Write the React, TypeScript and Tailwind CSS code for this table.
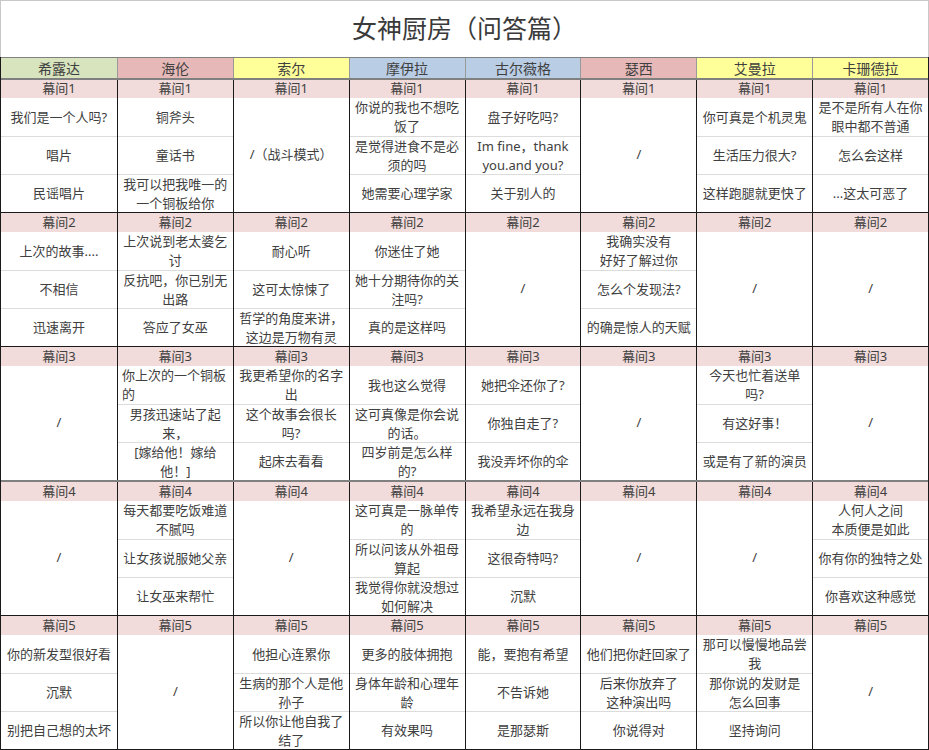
type Block = string | [string, string, string];

type Column = { name: string; color: string; blocks: Block[] };

const columns: Column[] = [
  {
    name: "希露达",
    color: "bg-[#d7e4bd]",
    blocks: [
      ["我们是一个人吗?", "唱片", "民谣唱片"],
      ["上次的故事....", "不相信", "迅速离开"],
      "/",
      "/",
      ["你的新发型很好看", "沉默", "别把自己想的太坏"],
    ],
  },
  {
    name: "海伦",
    color: "bg-[#e6b9b8]",
    blocks: [
      ["铜斧头", "童话书", "我可以把我唯一的一个铜板给你"],
      ["上次说到老太婆乞讨", "反抗吧，你已别无出路", "答应了女巫"],
      ["你上次的一个铜板的", "男孩迅速站了起来，", "[嫁给他！嫁给他！]"],
      ["每天都要吃饭难道不腻吗", "让女孩说服她父亲", "让女巫来帮忙"],
      "/",
    ],
  },
  {
    name: "索尔",
    color: "bg-[#ffff99]",
    blocks: [
      "/（战斗模式）",
      ["耐心听", "这可太惊悚了", "哲学的角度来讲，这边是万物有灵"],
      ["我更希望你的名字出", "这个故事会很长吗?", "起床去看看"],
      "/",
      ["他担心连累你", "生病的那个人是他孙子", "所以你让他自我了结了"],
    ],
  },
  {
    name: "摩伊拉",
    color: "bg-[#b9cde5]",
    blocks: [
      ["你说的我也不想吃饭了", "是觉得进食不是必须的吗", "她需要心理学家"],
      ["你迷住了她", "她十分期待你的关注吗?", "真的是这样吗"],
      ["我也这么觉得", "这可真像是你会说的话。", "四岁前是怎么样的?"],
      ["这可真是一脉单传的", "所以问该从外祖母算起", "我觉得你就没想过如何解决"],
      ["更多的肢体拥抱", "身体年龄和心理年龄", "有效果吗"],
    ],
  },
  {
    name: "古尔薇格",
    color: "bg-[#b9cde5]",
    blocks: [
      ["盘子好吃吗?", "Im fine，thank you.and you?", "关于别人的"],
      "/",
      ["她把伞还你了?", "你独自走了?", "我没弄坏你的伞"],
      ["我希望永远在我身边", "这很奇特吗?", "沉默"],
      ["能，要抱有希望", "不告诉她", "是那瑟斯"],
    ],
  },
  {
    name: "瑟西",
    color: "bg-[#e6b9b8]",
    blocks: [
      "/",
      ["我确实没有\n好好了解过你", "怎么个发现法?", "的确是惊人的天赋"],
      "/",
      "/",
      ["他们把你赶回家了", "后来你放弃了\n这种演出吗", "你说得对"],
    ],
  },
  {
    name: "艾曼拉",
    color: "bg-[#ffff99]",
    blocks: [
      ["你可真是个机灵鬼", "生活压力很大?", "这样跑腿就更快了"],
      "/",
      ["今天也忙着送单吗?", "有这好事！", "或是有了新的演员"],
      "/",
      ["那可以慢慢地品尝我", "那你说的发财是\n怎么回事", "坚持询问"],
    ],
  },
  {
    name: "卡珊德拉",
    color: "bg-[#ffff99]",
    blocks: [
      ["是不是所有人在你眼中都不普通", "怎么会这样", "...这太可恶了"],
      "/",
      "/",
      ["人何人之间\n本质便是如此", "你有你的独特之处", "你喜欢这种感觉"],
      "/",
    ],
  },
];

// section top borders: first sits under the header, the 4th is a heavier grey rule
const sectionBorder = [
  "",
  "border-t border-[#1a1a1a]",
  "border-t border-[#1a1a1a]",
  "border-t-2 border-[#808080]",
  "border-t border-[#1a1a1a]",
];

const leftAligned = new Set(["你上次的一个铜板的"]);

function Cell({ text, first }: { text: string; first: boolean }) {
  return (
    <div
      className={`flex h-[38px] items-center px-[4px] leading-[19px] whitespace-pre-line ${
        first ? "" : "border-t border-[#dcdcdc]"
      } ${leftAligned.has(text) ? "justify-start text-left" : "justify-center text-center"}`}
    >
      <span className="w-full">{text}</span>
    </div>
  );
}

export default function App() {
  return (
    <div className="w-[929px] bg-white font-['Noto_Sans','Noto_Sans_CJK_SC',sans-serif] text-[13px] text-[#404040]">
      <div className="flex h-[57px] items-center justify-center border border-b-0 border-[#c8c8c8] text-[25px] text-[#3a3a3a]">
        女神厨房（问答篇）
      </div>

      <div className="border-x border-b border-[#1a1a1a]">
        <div className="grid grid-cols-8 border-t border-b-2 border-[#808080] text-[14px]">
          {columns.map((c, i) => (
            <div
              key={c.name}
              className={`flex h-[20px] items-center justify-center ${c.color} ${i ? "border-l border-[#9a9a9a]" : ""}`}
            >
              {c.name}
            </div>
          ))}
        </div>

        {[0, 1, 2, 3, 4].map((s) => (
          <div key={s} className={`grid grid-cols-8 ${sectionBorder[s]}`}>
            {columns.map((c, i) => {
              const block = c.blocks[s];
              return (
                <div key={c.name} className={`flex flex-col ${i ? "border-l border-[#1a1a1a]" : ""}`}>
                  <div
                    className={`flex items-center justify-center bg-[#f2dcdb] ${s === 0 ? "h-[18px]" : "h-[19px]"}`}
                  >
                    幕间{s + 1}
                  </div>
                  {typeof block === "string" ? (
                    <div className="flex h-[114px] items-center justify-center px-[4px] text-center">{block}</div>
                  ) : (
                    block.map((t, k) => <Cell key={k} text={t} first={k === 0} />)
                  )}
                </div>
              );
            })}
          </div>
        ))}
      </div>
    </div>
  );
}
